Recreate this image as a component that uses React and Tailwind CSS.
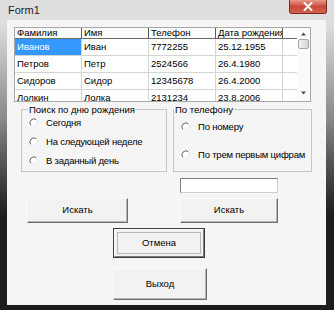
import { useState } from 'react'

const columns = ['Фамилия', 'Имя', 'Телефон', 'Дата рождения']

const rows = [
  ['Иванов', 'Иван', '7772255', '25.12.1955'],
  ['Петров', 'Петр', '2524566', '26.4.1980'],
  ['Сидоров', 'Сидор', '12345678', '26.4.2000'],
  ['Лолкин', 'Лолка', '2131234', '23.8.2006']
]

function Radio({ label, checked, onClick }) {
  return (
    <div className="flex items-center cursor-default whitespace-nowrap" onClick={onClick}>
      <svg width="9" height="9" viewBox="0 0 9 9" className="shrink-0">
        <circle cx="4.5" cy="4.5" r="4" fill="#ffffff" />
        <path d="M7.3 1.7 A4 4 0 0 0 1.7 7.3" fill="none" stroke="#5a5a5a" strokeWidth="1" />
        <path d="M1.7 7.3 A4 4 0 0 0 7.3 1.7" fill="none" stroke="#e4e4e4" strokeWidth="1" />
        {checked && <circle cx="4.5" cy="4.5" r="1.6" fill="#222" />}
      </svg>
      <span className="ml-[8px] leading-[11px] tracking-[-0.2px]">{label}</span>
    </div>
  )
}

function Button({ children, className = '' }) {
  return (
    <button
      className={`flex items-center justify-center bg-[#f2f2f2] border border-t-[#fafafa] border-l-[#fafafa] border-r-[#6e6e6e] border-b-[#6e6e6e] shadow-[inset_-1px_-1px_0_#b4b4b4] text-[9.5px] text-black ${className}`}
    >
      {children}
    </button>
  )
}

function App() {
  const [birthMode, setBirthMode] = useState(null)
  const [phoneMode, setPhoneMode] = useState(null)

  return (
    <div className="w-[334px] h-[310px] overflow-hidden font-['Liberation_Sans',Arial,sans-serif] text-[9.5px] text-black">
      <div className="w-[334px] h-[310px] flex flex-col pl-[7px] pr-[8px] pb-[5px] bg-linear-to-b from-[#dedede] from-[8%] via-[#8a8a8a] via-[38%] to-[#1c1c1c] to-[70%]">
        {/* title bar */}
        <div className="h-[20px] flex justify-between items-start shrink-0">
          <span className="pl-[1px] pt-[5px] text-[11px] leading-[11px] text-[#1e1e1e]">Form1</span>
          <div className="w-[38px] h-[14px] mr-[-1px] rounded-b-[3px] border border-t-0 border-[#7a2a22] bg-linear-to-b from-[#e89a8a] via-[#c9483a] to-[#d6604e] flex items-center justify-center">
            <svg width="10" height="9" viewBox="0 0 10 9">
              <path d="M1.5 1 L8.5 8 M8.5 1 L1.5 8" stroke="#ffffff" strokeWidth="2" strokeLinecap="round" />
            </svg>
          </div>
        </div>

        {/* client area */}
        <div className="flex-1 bg-[#f5f5f5] flex flex-col">
          {/* grid */}
          <div className="ml-[7px] mt-[7px] w-[297px] h-[75px] border border-[#a8a8a8] bg-white flex overflow-hidden">
            <div className="flex flex-col">
              <div className="flex h-[11px] border-b border-[#6a6a6a]">
                {columns.map((c) => (
                  <div key={c} className="w-[67px] border-r border-[#5a5a5a] bg-[#fbfbfb] pl-[2px] leading-[10px] whitespace-nowrap overflow-hidden">
                    {c}
                  </div>
                ))}
                <div className="w-[14px]" />
              </div>
              {rows.map((r, i) => (
                <div key={i} className="flex h-[17px] shrink-0 border-b border-[#d4d4d4]">
                  {r.map((v, j) => (
                    <div
                      key={j}
                      className={`w-[67px] border-r border-[#d4d4d4] pl-[2px] flex items-center whitespace-nowrap ${i === 0 && j === 0 ? 'bg-[#3399ff] text-white' : ''}`}
                    >
                      {v}
                    </div>
                  ))}
                  <div className="w-[14px]" />
                </div>
              ))}
            </div>
            {/* scrollbar */}
            <div className="w-[13px] bg-[#fafafa] flex flex-col items-center">
              <svg width="7" height="10" viewBox="0 0 7 10" className="mt-[1px]">
                <path d="M1 6.5 L3.5 3.5 L6 6.5 Z" fill="#4a4a4a" />
              </svg>
              <div className="w-[11px] h-[10px] rounded-[2px] border border-[#a6a6a6] bg-linear-to-r from-[#f2f2f2] to-[#d6d6d6]" />
              <div className="flex-1" />
              <svg width="7" height="10" viewBox="0 0 7 10" className="mb-[3px]">
                <path d="M1 3.5 L3.5 6.5 L6 3.5 Z" fill="#4a4a4a" />
              </svg>
            </div>
          </div>

          {/* group boxes */}
          <div className="flex mt-[2px]">
            <fieldset className="ml-[14px] w-[146px] h-[68px] border border-[#c6c6c6] flex flex-col">
              <legend className="ml-[6px] px-[1px] leading-[11px]">Поиск по дню рождения</legend>
              <div className="pl-[7px] pt-[2px] flex flex-col gap-[8px]">
                <Radio label="Сегодня" checked={birthMode === 0} onClick={() => setBirthMode(0)} />
                <Radio label="На следующей неделе" checked={birthMode === 1} onClick={() => setBirthMode(1)} />
                <Radio label="В заданный день" checked={birthMode === 2} onClick={() => setBirthMode(2)} />
              </div>
            </fieldset>
            <fieldset className="ml-[6px] w-[139px] h-[68px] border border-[#c6c6c6] flex flex-col">
              <legend className="ml-[0px] px-[1px] leading-[11px]">По телефону</legend>
              <div className="pl-[7px] pt-[6px] flex flex-col gap-[17px]">
                <Radio label="По номеру" checked={phoneMode === 0} onClick={() => setPhoneMode(0)} />
                <Radio label="По трем первым цифрам" checked={phoneMode === 1} onClick={() => setPhoneMode(1)} />
              </div>
            </fieldset>
          </div>

          {/* phone input */}
          <input
            className="ml-[173px] mt-[6px] w-[98px] h-[15px] bg-white border border-[#7d7d7d] border-b-[#cfcfcf] border-r-[#cfcfcf] outline-none text-[10px] px-[2px]"
            defaultValue=""
          />

          {/* search buttons */}
          <div className="flex mt-[5px]">
            <Button className="ml-[20px] w-[101px] h-[25px]">Искать</Button>
            <Button className="ml-[52px] w-[98px] h-[25px]">Искать</Button>
          </div>

          {/* cancel (default button) */}
          <div className="ml-[106px] mt-[5px] w-[92px] h-[30px] border border-[#3c3c3c] bg-[#f2f2f2]">
            <div className="w-full h-full border border-t-[#fdfdfd] border-l-[#fdfdfd] border-r-[#7a7a7a] border-b-[#7a7a7a] p-[2px]">
              <div className="w-full h-full border border-[#b8b8b8] flex items-center justify-center">Отмена</div>
            </div>
          </div>

          <Button className="ml-[106px] mt-[10px] w-[94px] h-[32px]">Выход</Button>
        </div>
      </div>
    </div>
  )
}

export default App
